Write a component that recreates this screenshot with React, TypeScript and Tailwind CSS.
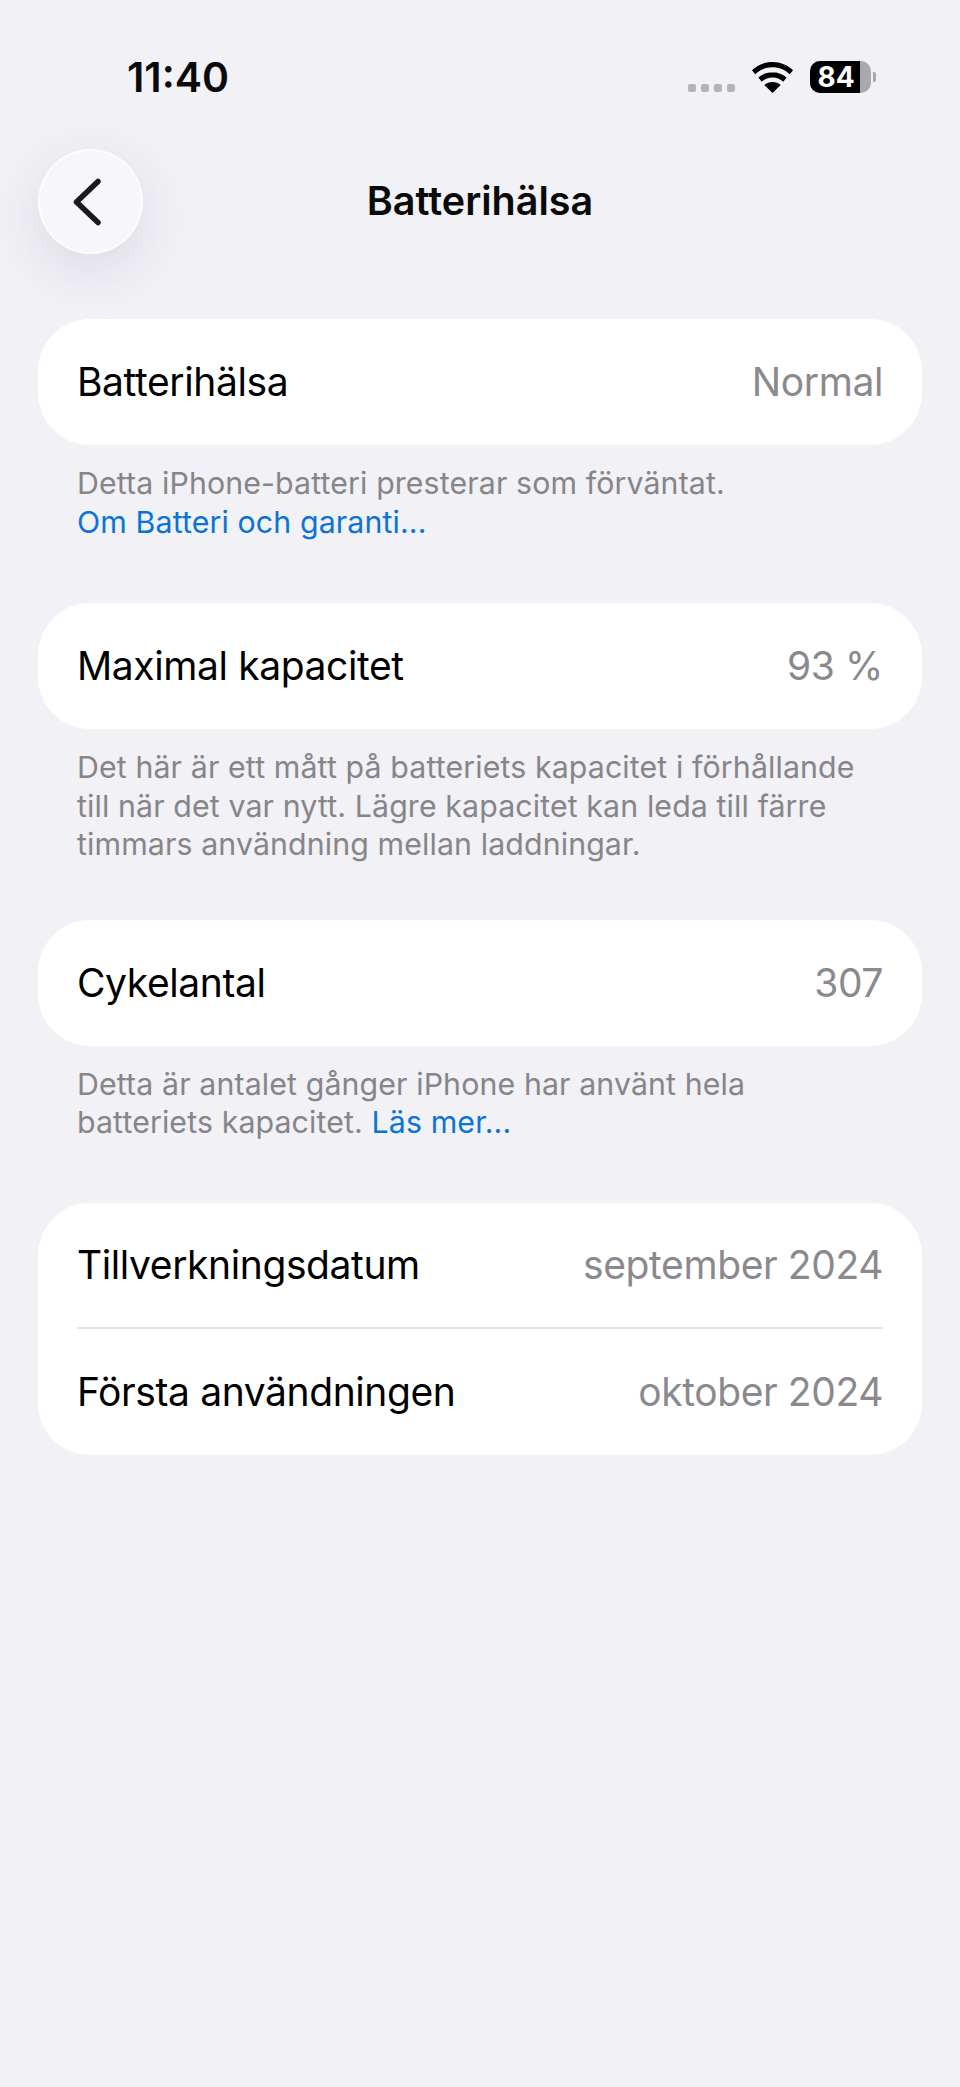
function Row({ label, value, short }: { label: string; value: string; short?: boolean }) {
  return (
    <div className={short ? "flex h-[124px] items-center justify-between" : "flex h-[126px] items-center justify-between"}>
      <span className="text-black">{label}</span>
      <span className="text-[#8a8a8e]">{value}</span>
    </div>
  );
}

function Card({ children }: { children: React.ReactNode }) {
  return <div className="rounded-[52px] bg-white px-[39px] text-[39px] leading-[48px] tracking-[-0.4px]">{children}</div>;
}

function Caption({ children }: { children: React.ReactNode }) {
  return <p className="mt-[19px] px-[39px] text-[30.3px] leading-[38.5px] tracking-[0.12px] text-[#85858a]">{children}</p>;
}

function StatusBar() {
  return (
    <div className="flex h-[149px] items-center justify-between pl-[127px] pr-[84px] pt-[5px]">
      <span className="text-[41px] font-semibold leading-none text-[#0a0a0a]">11:40</span>
      <div className="flex items-center">
        <div className="mt-[22px] flex gap-[5px]">
          <span className="h-2 w-2 rounded-[2px] bg-[#b4b4b8]" />
          <span className="h-2 w-2 rounded-[2px] bg-[#b4b4b8]" />
          <span className="h-2 w-2 rounded-[2px] bg-[#b4b4b8]" />
          <span className="h-2 w-2 rounded-[2px] bg-[#b4b4b8]" />
        </div>
        <svg className="ml-[17px]" width="41" height="31" viewBox="0 0 41 31">
          <path d="M20.5 0C12.5 0 5.6 3 0 8.2l3.2 4C8 7.8 14 5.2 20.5 5.2S33 7.8 37.8 12.2l3.2-4C35.4 3 28.5 0 20.5 0z" fill="#000" />
          <path d="M20.5 10.2c-5.4 0-10.2 2-14.1 5.4l3.3 4.1c2.9-2.6 6.7-4.2 10.8-4.2s7.9 1.6 10.8 4.2l3.3-4.1c-3.9-3.4-8.7-5.4-14.1-5.4z" fill="#000" />
          <path d="M20.5 20c-3.2 0-6 1.1-8.2 3l8.2 8 8.2-8c-2.2-1.9-5-3-8.2-3z" fill="#000" />
        </svg>
        <div className="ml-[17px] flex items-center">
          <div className="flex h-[32px] w-[61px] overflow-hidden rounded-[10px] bg-[#aaaaae]">
            <div className="flex w-[50px] items-center justify-center bg-black pl-[2px] text-[28px] font-bold leading-none text-white">
              84
            </div>
          </div>
          <div className="ml-[2px] h-[10px] w-[3px] rounded-r-[2px] bg-[#aaaaae]" />
        </div>
      </div>
    </div>
  );
}

export default function App() {
  return (
    <div className="h-[2087px] w-[960px] overflow-hidden bg-[#f1f1f6] font-['Inter',sans-serif]">
      <StatusBar />

      <div className="relative flex h-[105px] items-center justify-center px-[38px]">
        <button className="absolute left-[38px] top-0 flex h-[105px] w-[105px] items-center justify-center rounded-full border-2 border-white/70 bg-[#f7f7fa] shadow-[0_16px_56px_rgba(60,60,90,0.12)]">
          <svg width="30" height="48" viewBox="0 0 30 48" className="mr-[8px]">
            <path d="M26 3.5 4.5 24 26 44.5" fill="none" stroke="#1a1a1c" strokeWidth="5.5" strokeLinecap="round" strokeLinejoin="round" />
          </svg>
        </button>
        <h1 className="text-[39.5px] font-semibold leading-none text-[#0a0a0a]">Batterihälsa</h1>
      </div>

      <div className="mx-[38px] mt-[65px]">
        <Card>
          <Row label="Batterihälsa" value="Normal" />
        </Card>
        <Caption>
          Detta iPhone-batteri presterar som förväntat.
          <br />
          <span className="text-[#0a74d6]">Om Batteri och garanti...</span>
        </Caption>

        <div className="mt-[62px]">
          <Card>
            <Row label="Maximal kapacitet" value="93 %" />
          </Card>
        </div>
        <Caption>
          Det här är ett mått på batteriets kapacitet i förhållande
          <br />
          till när det var nytt. Lägre kapacitet kan leda till färre
          <br />
          timmars användning mellan laddningar.
        </Caption>

        <div className="mt-[56px]">
          <Card>
            <Row label="Cykelantal" value="307" />
          </Card>
        </div>
        <Caption>
          Detta är antalet gånger iPhone har använt hela
          <br />
          batteriets kapacitet. <span className="text-[#0a74d6]">Läs mer...</span>
        </Caption>

        <div className="mt-[61px]">
          <Card>
            <Row short label="Tillverkningsdatum" value="september 2024" />
            <div className="h-[2px] bg-[#e4e4e7]" />
            <Row label="Första användningen" value="oktober 2024" />
          </Card>
        </div>
      </div>
    </div>
  );
}
